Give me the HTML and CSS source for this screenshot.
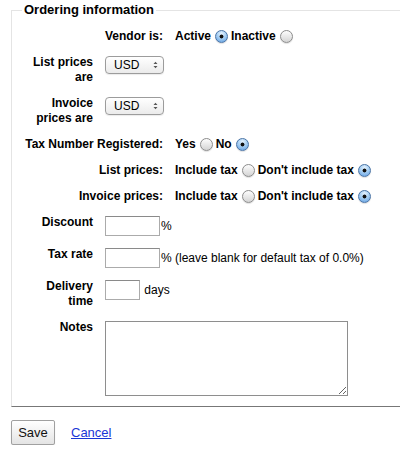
FILE: index.html
```html
<!DOCTYPE html>
<html>
<head>
<meta charset="utf-8">
<link rel="stylesheet" href="styles.css">
</head>
<body>
<fieldset class="rows">
  <legend>Ordering information</legend>
  <ol class="list">
    <li class="row wide">
      <span class="lbl">Vendor is:</span>
      <span class="opt">Active<input type="radio" name="active" checked>Inactive<input type="radio" name="active"></span>
    </li>
    <li class="row">
      <span class="lbl">List prices are</span>
      <span class="sel"><select class="select"><option>USD</option></select><svg class="arrows" width="5" height="8" viewBox="0 0 5 8"><path d="M0.5 3 L2.5 0.8 L4.5 3 Z M0.5 5 L2.5 7.2 L4.5 5 Z" fill="#555"/></svg></span>
    </li>
    <li class="row">
      <span class="lbl">Invoice prices are</span>
      <span class="sel"><select class="select"><option>USD</option></select><svg class="arrows" width="5" height="8" viewBox="0 0 5 8"><path d="M0.5 3 L2.5 0.8 L4.5 3 Z M0.5 5 L2.5 7.2 L4.5 5 Z" fill="#555"/></svg></span>
    </li>
    <li class="row wide">
      <span class="lbl">Tax Number Registered:</span>
      <span class="opt">Yes<input type="radio" name="gst">No<input type="radio" name="gst" checked></span>
    </li>
    <li class="row wide">
      <span class="lbl">List prices:</span>
      <span class="opt">Include tax<input type="radio" name="lp">Don't include tax<input type="radio" name="lp" checked></span>
    </li>
    <li class="row wide">
      <span class="lbl">Invoice prices:</span>
      <span class="opt">Include tax<input type="radio" name="ip">Don't include tax<input type="radio" name="ip" checked></span>
    </li>
    <li class="row">
      <span class="lbl">Discount</span>
      <span class="val"><input type="text" class="txt">%</span>
    </li>
    <li class="row">
      <span class="lbl">Tax rate</span>
      <span class="val"><input type="text" class="txt">% (leave blank for default tax of 0.0%)</span>
    </li>
    <li class="row">
      <span class="lbl">Delivery time</span>
      <span class="val"><input type="text" class="txt short"> days</span>
    </li>
    <li class="row">
      <span class="lbl">Notes</span>
      <textarea class="notes"></textarea>
    </li>
  </ol>
</fieldset>
<div class="actions">
  <button class="save" type="button">Save</button>
  <a class="cancel" href="#">Cancel</a>
</div>
</body>
</html>
```
FILE: styles.css
```css
html, body {
  margin: 0;
  background: #fff;
}
body {
  font: 12px "Liberation Sans", Arial, sans-serif;
  color: #000;
  width: 400px;
  overflow: hidden;
}
.rows {
  margin: 2px 0 0 11px;
  padding: 0 0 10px 0;
  border: 0;
  border-top: 1px solid #e4e4e4;
  border-left: 1px solid #e4e4e4;
  border-bottom: 1px solid #777;
  min-width: 0;
}
.rows legend {
  font-weight: bold;
  font-size: 13px;
  line-height: 16px;
  padding: 0 2px;
  margin-left: 10px;
}
.list {
  list-style: none;
  margin: 0;
  padding: 11px 0 0;
  display: flex;
  flex-direction: column;
  gap: 11px;
}
.row {
  display: flex;
  align-items: flex-start;
  line-height: 15px;
}
.wide {
  align-items: center;
}
.lbl {
  flex: none;
  width: 70px;
  margin: 0 12px 0 11px;
  text-align: right;
  font-weight: bold;
}
.wide .lbl {
  width: 151px;
  margin-left: 0;
}
.opt {
  display: flex;
  align-items: center;
  font-weight: bold;
}
.opt input[type=radio] {
  appearance: none;
  -webkit-appearance: none;
  box-sizing: border-box;
  width: 13px;
  height: 13px;
  margin: 0 3px 0 4px;
  border-radius: 50%;
  border: 1px solid #8c8c8c;
  background: linear-gradient(#fdfdfd, #d4d4d4);
  box-shadow: 0 1px 1px rgba(0,0,0,0.12);
}
.opt input[type=radio]:checked {
  border-color: #4a74a6;
  background:
    radial-gradient(circle, #111 0 1.6px, transparent 2.3px),
    radial-gradient(circle at 50% 25%, #e6f3fe 0, #a7cff3 45%, #5f9de0 100%);
}
.sel {
  position: relative;
  display: inline-block;
  margin-top: 1px;
}
.select {
  appearance: none;
  -webkit-appearance: none;
  display: block;
  box-sizing: border-box;
  width: 59px;
  height: 18px;
  margin: 0;
  padding: 0 0 0 8px;
  border: 1px solid #9c9c9c;
  border-radius: 4px;
  background: linear-gradient(#ffffff, #ebebeb);
  box-shadow: 0 1px 1px rgba(0,0,0,0.08);
  font: 12px "Liberation Sans", Arial, sans-serif;
  color: #000;
}
.arrows {
  position: absolute;
  right: 6px;
  top: 5px;
  pointer-events: none;
}
.val {
  display: block;
  margin-top: 1px;
  line-height: 20px;
  white-space: nowrap;
}
.txt {
  box-sizing: border-box;
  width: 55px;
  height: 20px;
  margin: 0 1px 0 0;
  padding: 0 2px;
  border: 1px solid #ababab;
  border-top-color: #8a8a8a;
  vertical-align: top;
  font: 12px "Liberation Sans", Arial, sans-serif;
}
.txt.short {
  width: 35px;
}
.notes {
  box-sizing: border-box;
  width: 243px;
  height: 75px;
  margin: 1px 0 0;
  border: 1px solid #8e8e8e;
  font: 12px "Liberation Sans", Arial, sans-serif;
  vertical-align: top;
}
.actions {
  margin: 13px 0 0 11px;
  display: flex;
  align-items: center;
  gap: 16px;
}
.save {
  box-sizing: border-box;
  width: 44px;
  height: 25px;
  margin: 0;
  padding: 0;
  border: 1px solid #a0a0a0;
  border-radius: 2px;
  background: linear-gradient(#ffffff, #e4e4e4);
  box-shadow: 0 1px 1px rgba(0,0,0,0.15);
  font: 13px "Liberation Sans", Arial, sans-serif;
  color: #111;
}
.cancel {
  font-size: 13px;
  color: #1a35d6;
  text-decoration: underline;
}
```
